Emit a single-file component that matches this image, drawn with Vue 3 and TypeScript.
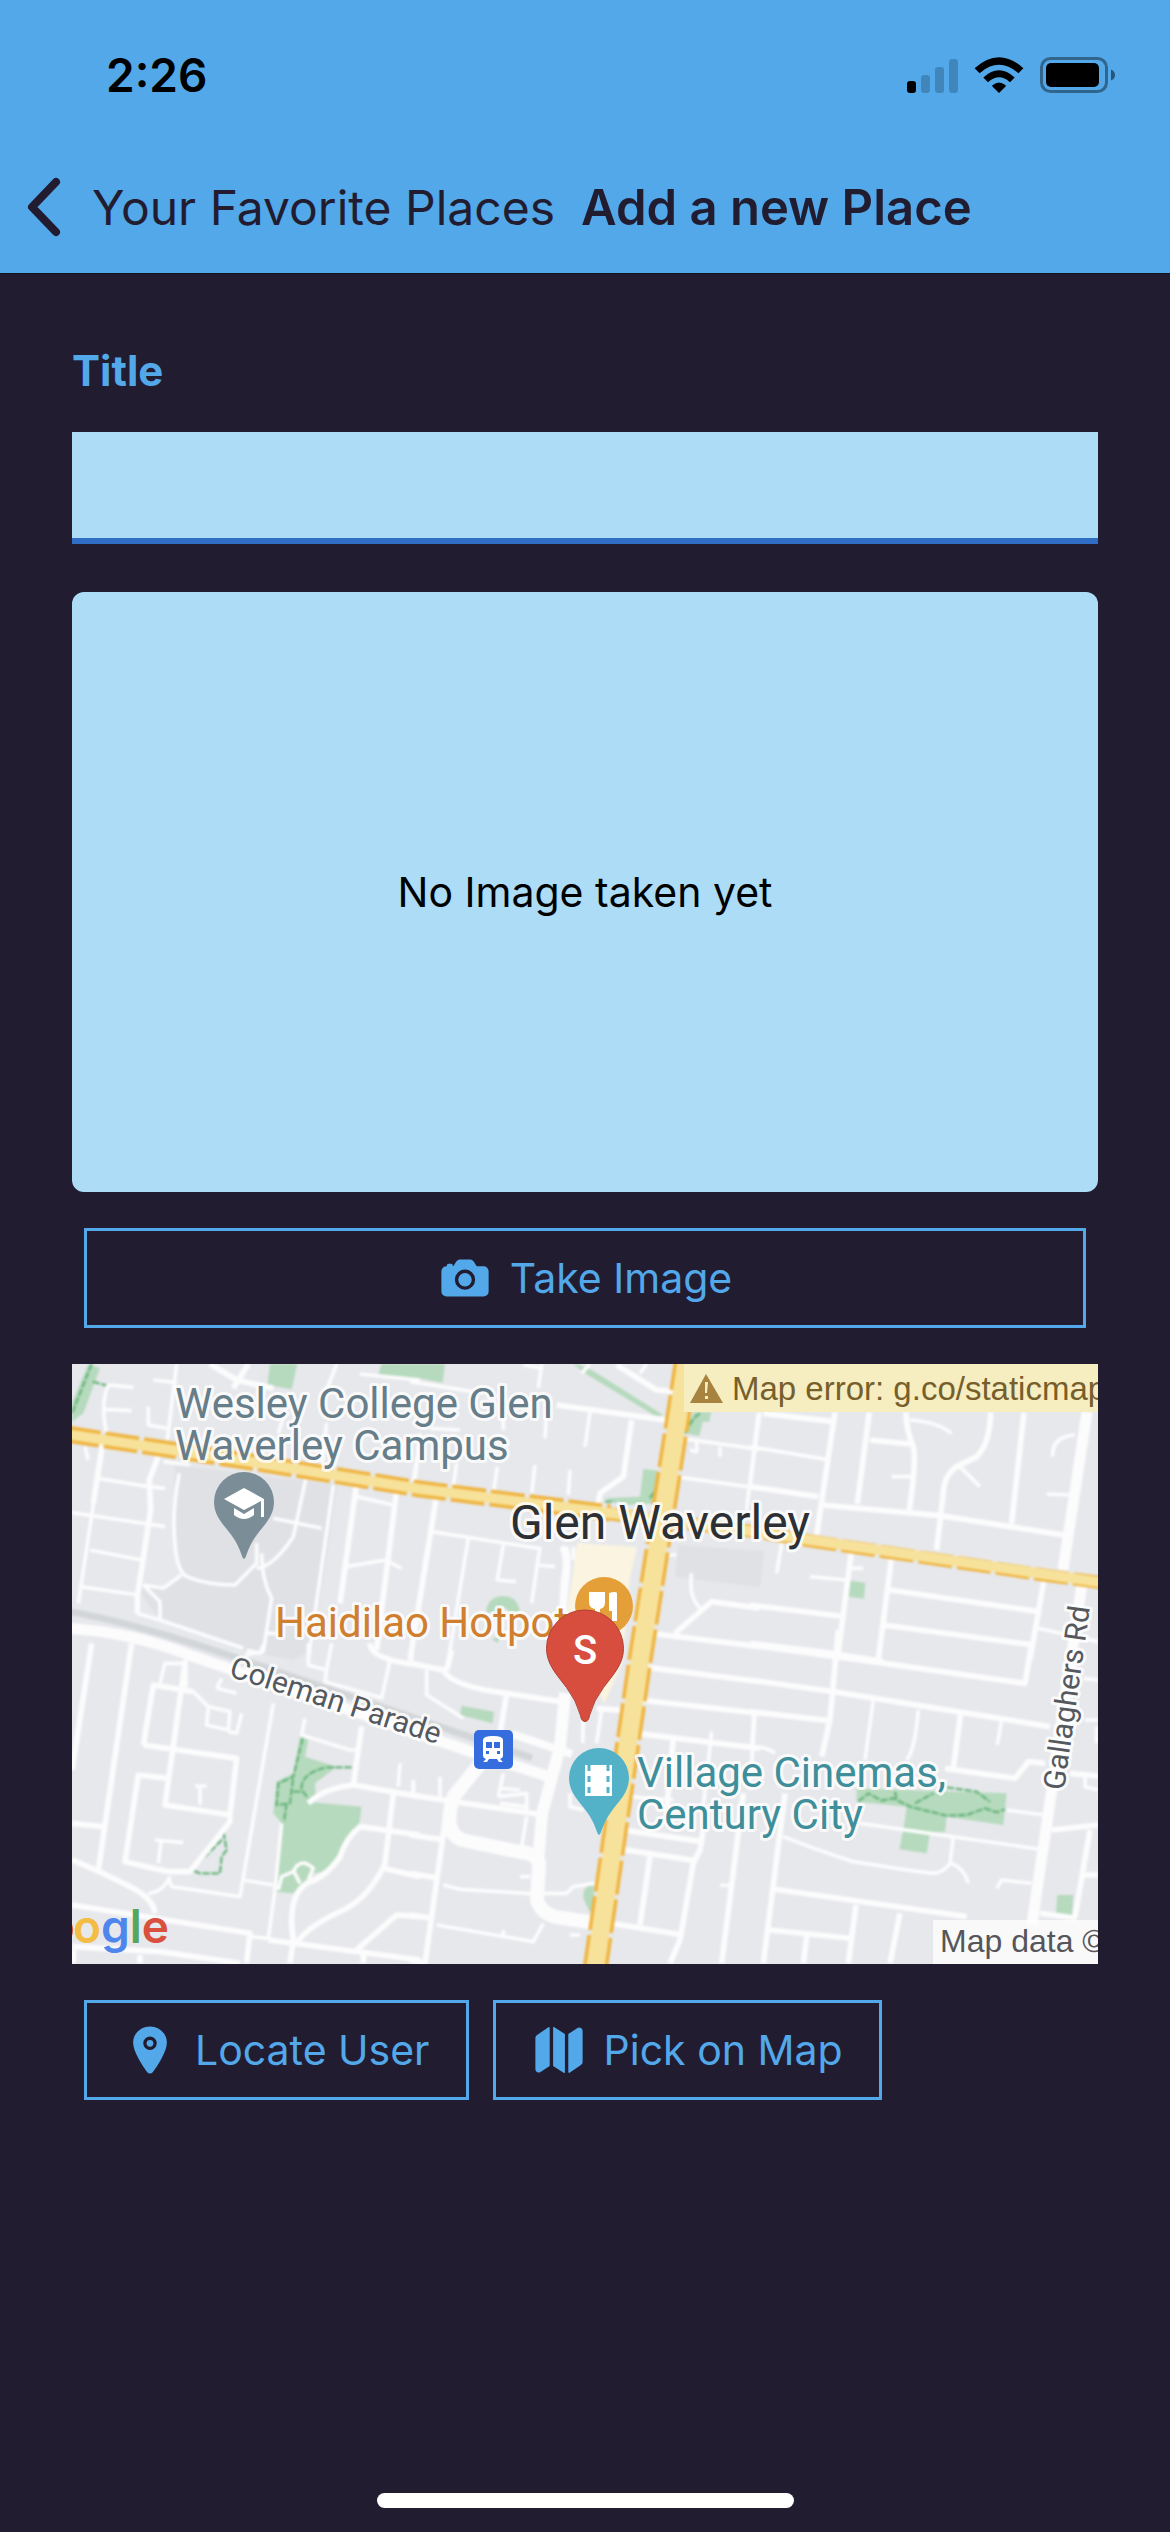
<script setup lang="ts">
import { ref } from 'vue'

interface MapTile {
  x: number
  y: number
  minor: string
  major: string
  parks: string
  trails: string
}

const title = ref('')

// Each tile is drawn in its own grid, three units to one map pixel.
const tiles: MapTile[] = [
  {
    x: -12,
    y: -14,
    minor:
      'M128 280L55 760M115 385L265 410L315 415M36 488L315 530M90 600L245 630M60 710L235 735M350 42L322 270M250 705L310 715L365 675M250 705L300 755V810M358 370Q335 480 345 580Q350 660 380 680Q440 705 525 705L590 640V580M740 375L700 560Q640 650 590 655M640 505L785 535M605 610Q605 690 635 745L610 905L555 915M820 405L745 930M890 440L1000 465M860 650L975 630L1025 655M140 250Q120 160 145 105L220 112M130 178L215 182M265 170V225L320 235M280 90L350 98M830 42L800 120M900 72L1080 90M655 250L670 200M785 350L800 220M1065 390L1080 250M230 790L300 810L550 895M620 850H650M75 290L85 330M310 335L390 345',
    major: 'M298 310L268 390L272 480L232 740V790M450 42L530 90L640 115M565 42L520 115M890 400L840 760M1010 420L950 900M128 280L100 460',
    parks: 'M85 42L120 55L70 190L36 215V160ZM630 42H712L695 118L622 105ZM965 42H1080V92L955 72Z',
    trails: 'M95 42L36 190M98 95L145 108',
  },
  {
    x: 338,
    y: -14,
    minor:
      'M0 95L190 125M395 42L385 115M340 45L400 55M410 180L405 265M540 185L525 290M690 70L710 42M515 70L540 42M10 395L20 330M130 410L140 340M250 430L262 350M375 345L365 430M480 360L475 435M65 545L385 595M175 565L115 930M280 585L262 690L318 695M390 590L365 760M380 645L435 650M815 265L1050 298M1045 190L1010 480M795 380L1050 415M840 300L860 305V275M930 290V320M770 615H800M845 670Q835 740 870 775M280 240V200M60 235L150 240M490 590V630',
    major: 'M440 165L780 212M665 210L640 380L570 430L565 460M620 45L740 120L795 125M80 435L0 930M455 590Q475 620 460 700L455 800M465 590Q480 620 468 700L460 800M795 850L905 755L1050 775M720 850L1050 890',
    parks: 'M0 42H105L98 98L0 80ZM500 42L545 60L760 195L740 200L525 70L490 42ZM850 187H903L898 215H878L868 258L825 250ZM700 357L745 362L738 460L655 465L580 445L690 440ZM228 785Q235 738 280 738Q322 740 330 785L300 790Q280 755 255 790ZM245 865L270 862L262 880Z',
    trails: 'M870 190Q850 200 825 250M745 405L720 445M585 455H615',
  },
  {
    x: 678,
    y: -14,
    minor:
      'M30 187L0 410M0 290L230 328M480 210Q560 215 605 250M425 380H485M630 350L690 410M975 255Q905 260 908 320M890 432L960 435M305 655H340M180 680L290 690M95 580L80 670M865 835L1044 875',
    major:
      'M40 190L250 215M255 187L200 555M0 410L205 440M358 187L322 462M360 270L480 282M468 187Q468 240 490 290Q500 330 478 480M722 187Q720 280 680 320L620 350Q590 370 582 410L560 600M822 187L785 520M215 465L570 497L940 555M305 600L262 930M425 620L385 930M420 720L865 785M882 690L840 930M400 825L850 885M0 765L270 798M0 880L230 908L400 935',
    parks: 'M300 692L346 698L342 746L296 740Z',
    trails: '',
  },
  {
    x: -12,
    y: 286,
    minor:
      'M300 100L315 40H370M400 125L445 170L510 185L505 240L440 225L445 170M640 160L540 740L335 710L325 680M405 408H440M420 408V465M285 570L370 578M303 575L295 640M330 680Q310 725 265 730M470 115L530 130M545 190L530 250L505 245M485 85L470 115M735 205L725 255L870 300H890M550 690L640 705M665 520L645 720L625 865M1020 340L1015 410M1060 390V430M990 30L965 145M745 -20V45L800 60L795 95L970 145M815 -20L800 60M560 0L600 10L610 -15M1055 0V40M655 720L665 680L700 665Q720 620 760 655L745 690M700 660L720 700M625 865L570 860',
    major:
      'M95 -20L36 360M215 -20L115 660M250 285L280 105L400 125M375 40L355 180L315 465L510 495L530 325L250 285M325 665L195 635L235 375L325 385M325 665L390 665L510 515V495M36 520L130 530M36 630Q110 660 210 710Q280 745 285 790M36 765L570 850L560 940M240 940V915M36 890L300 905L540 940M905 230L880 405M745 460Q790 415 880 405L1080 440M1000 430L975 640Q930 740 850 780Q740 830 710 880M1080 555L900 530Q860 560 840 620Q800 680 740 700Q680 740 700 870L690 940M970 655L1080 680M625 870L700 880L1080 930M910 940V910M890 900L1010 795L1080 800M930 -20Q930 30 1080 45M375 30V110M40 900V940',
    parks:
      'M720 260L745 270L735 320L830 350L765 400L768 440L740 455L905 470L898 520Q870 550 840 620Q800 670 765 668L700 730L648 725L665 520L640 490L650 395L700 370Z',
    trails:
      'M728 265L700 380L655 400L650 465L690 460L700 380M680 460L672 515M875 352H800Q720 370 725 420L745 445M700 425H725M490 545L500 600L485 620L480 670H420L395 660L490 565',
  },
  {
    x: 338,
    y: 286,
    minor:
      'M50 60V135L160 205M520 210L518 280M575 175L560 280M280 370L265 440M350 500L335 590M100 705L150 718L350 730H470L490 710L555 700M80 825L370 875L400 820M10 435V390M90 440V380M265 440L350 430V480M270 460L350 470M275 415L330 420M905 245L880 470M1035 190L1020 420M930 705L970 708M655 440L790 450M280 840V860M330 680H360M480 430V470L520 480M480 855H510',
    major:
      'M0 40L100 60Q125 110 290 130L450 155M125 0L110 60M290 130L270 250M560 175L650 182M0 435L400 495M0 555L105 570M110 480L45 940M0 670L85 685M0 795L65 805M710 52L1050 95M690 150L1050 190M680 250L1050 295M790 265L770 480M640 540L875 575M630 597L855 632M880 540L870 600L850 640L810 870L780 940M720 620L690 825M600 820L820 855M1000 430L935 940M0 930L50 940',
    parks: 'M155 167L252 185L248 220L150 195ZM550 705Q520 705 520 740Q525 760 540 785L555 780Z',
    trails: '',
  },
  {
    x: 678,
    y: 286,
    minor:
      'M385 0V30M12 190L5 290Q50 290 75 310M370 150L345 330M505 180Q495 300 470 330M755 210L742 285M770 480L885 495M330 520L865 597M610 560L600 640Q580 670 550 670L470 660L310 635Q200 600 100 560M600 640Q640 650 655 700M740 715L755 690L845 700M1000 85L1044 90M1005 210H1044M1005 380V410L1044 420M1040 230V280',
    major:
      'M0 -15L260 20L825 100L845 -20M265 -60L240 210L215 320M0 90L250 125L900 230M0 185L235 212M632 190L610 355M585 355L795 385L835 335L885 340M105 430L40 940M75 718L370 760L650 800M60 840L300 865M318 765L295 940M170 860L160 940M450 790L420 940M905 540L1044 525M1020 540L975 800M990 675H1044M870 790L980 805M960 370L1044 378',
    parks: 'M320 415L770 430L760 525L590 500L585 547L540 545L530 610L448 598L460 540L470 470L320 455ZM922 735H970L966 797L918 790Z',
    trails:
      'M325 455L355 430L395 452L430 445L480 470L590 497L650 495L705 475L740 487L765 478M590 412L680 425L720 455M435 425L440 450M495 460L550 430',
  },
]

const bars = [12, 18, 26, 34]
</script>

<template>
  <div class="screen">
    <header class="top">
      <div class="status">
        <span class="time">2:26</span>
        <div class="status-icons">
          <svg width="51" height="36" viewBox="0 0 51 36" aria-label="Signal">
            <rect
              v-for="(h, i) in bars"
              :key="h"
              :x="i * 14"
              :y="36 - h"
              width="9"
              :height="h"
              rx="3"
              :fill-opacity="i === 0 ? 1 : 0.2"
            />
          </svg>
          <svg width="50" height="36" viewBox="0 0 50 36" aria-label="Wi-Fi">
            <path d="M25 36L18.200 29.300Q18 28.500 18.800 28Q25 23 31.200 28Q32 28.500 31.800 29.300Z" />
            <path d="M9.300 20.600Q25 6 40.700 20.600L36 25.200Q25 15.500 14 25.200Z" />
            <path d="M.6 11.200Q25-10.800 49.400 11.200L44.400 16.200Q25-.5 5.600 16.200Z" />
          </svg>
          <svg width="76" height="36" viewBox="0 0 76 36" aria-label="Battery">
            <rect x="1.500" y="1.500" width="65" height="33" rx="9" fill="none" stroke="#000" stroke-width="3" opacity=".4" />
            <rect x="6" y="6" width="53" height="24" rx="5" />
            <path d="M71 12.500Q75 14 75 18T71 23.500Z" opacity=".5" />
          </svg>
        </div>
      </div>
      <nav class="nav">
        <a class="back" href="#">
          <svg width="36" height="60" viewBox="0 0 36 60" aria-hidden="true">
            <path d="M30 5L6 30L30 55" />
          </svg>
          <span>Your Favorite Places</span>
        </a>
        <h1>Add a new Place</h1>
      </nav>
    </header>

    <main class="form">
      <label for="place-title">Title</label>
      <input id="place-title" v-model="title" type="text" />

      <div class="preview">No Image taken yet</div>
      <div class="actions">
        <button type="button" class="wide">
          <svg viewBox="0 0 512 512" aria-hidden="true">
            <path
              fill-rule="evenodd"
              d="M432 144h-59c-3 0-6.720-1.940-9.620-5l-25.940-40.940a15.520 15.520 0 00-1.370-1.850C327.110 85.760 315 80 302 80h-92c-13 0-25.110 5.760-34.070 16.210a15.520 15.520 0 00-1.370 1.850l-25.940 41c-2.220 2.420-5.340 5-8.620 5v-8a16 16 0 00-16-16h-24a16 16 0 00-16 16v8h-4a48 48 0 00-48 48V384a48 48 0 0048 48h352a48 48 0 0048-48V192a48 48 0 00-48-48zM256 368a96 96 0 1196-96a96 96 0 01-96 96z"
            />
            <circle cx="256" cy="272" r="64" />
          </svg>
          <span>Take Image</span>
        </button>
      </div>

      <svg class="map" viewBox="0 0 1026 600" preserveAspectRatio="xMidYMid slice" role="img" aria-label="Map of Glen Waverley">
        <g class="soft">
          <rect x="-6" y="-6" width="1038" height="612" fill="#e7e8ec" />
          <path fill="#dfe1e5" d="M103 101L265 121L241 286L221 296L168 286L88 256L66 226L71 221L91 224L110 211Q98 173 103 101Z" />
          <path fill="#dfe1e5" d="M606 181L692 187L688 223L603 213Z" />
          <path fill="#faf4e0" d="M505 179L565 183L558 213L550 300L532 340L495 250Z" />
          <path class="rail" d="M-6 247Q60 258 165 294L460 394" />
          <g v-for="t in tiles" :key="`p${t.x}-${t.y}`" :transform="`translate(${t.x} ${t.y}) scale(.3333)`">
            <path class="park" :d="t.parks" />
            <path class="trail" :d="t.trails" />
          </g>
          <g v-for="t in tiles" :key="`r${t.x}-${t.y}`" :transform="`translate(${t.x} ${t.y}) scale(.3333)`">
            <path class="road" :d="t.minor" />
            <path class="road major" :d="t.major" />
          </g>
          <path class="avenue" stroke-width="11" d="M-6 264Q60 268 120 292L400 388L478 413M1015 48L991 206M1010 220L960 560" />
          <path class="avenue" stroke-width="12" d="M493 329L488 383L470 450L466 500" />
          <path class="avenue" stroke-width="14" d="M408 400L382 432Q370 468 390 476L448 488Q468 490 467 502L465 536Q470 552 490 554L524 559" />
          <path class="avenue" stroke-width="8" d="M440 370L500 390" />
          <path class="highway-edge" stroke-width="17" d="M-6 70L180 98L348 125L538 149" />
          <path class="highway-edge" stroke-width="13" d="M538 150L678 167L745 178L971 211L1032 219" />
          <path class="highway-edge" stroke-width="25" d="M615 -6L604 66L568 296L523 606" />
          <path class="highway" stroke-width="10" d="M-6 70L180 98L348 125L538 149L678 167L745 177L971 210L1032 219" />
          <path class="highway" stroke-width="18" d="M615 -6L604 66L568 296L523 606" />
        </g>

        <g class="label school">
          <text x="103" y="54">Wesley College Glen</text>
          <text x="103" y="96">Waverley Campus</text>
        </g>
        <text class="label town" x="438" y="175">Glen Waverley</text>
        <text class="label food" x="203" y="273">Haidilao Hotpot</text>
        <text class="label street" transform="translate(156 312) rotate(18)">Coleman Parade</text>
        <text class="label street" transform="translate(992 427) rotate(-82)">Gallaghers Rd</text>
        <g class="label cinema">
          <text x="565" y="423">Village Cinemas,</text>
          <text x="565" y="465">Century City</text>
        </g>

        <g>
          <path fill="#7b8e98" d="M172 108a30 30 0 0130 30c0 15-11 24-18 34q-6 8-10 20q-2 6-4 0q-4-12-10-20c-7-10-18-19-18-34a30 30 0 0130-30z" />
          <path fill="#fff" d="M152 135l20-11l20 11v18h-3v-16l-17 9zM162 144l10 6l10-6v7q-10 8-20 0z" />
        </g>
        <circle cx="532" cy="242" r="29" fill="#e59f38" />
        <path fill="#fff" d="M517 228h16v10q0 6-5 7v12h-5v-12q-6-1-6-7zM537 229q7-2 8 0v28h-5v-10h-3z" />
        <g>
          <path fill="#d74e3f" stroke="#b23f34" d="M513 246a38.500 38.500 0 0138.500 38.500c0 16-11 27-20 39q-10 13-14 28q-1 6-4.500 6t-4.500-6q-4-15-14-28c-9-12-20-23-20-39a38.500 38.500 0 0138.500-38.500z" />
          <text class="pin-letter" x="513" y="300">S</text>
        </g>
        <rect x="402" y="366" width="39" height="39" rx="5" fill="#356ddf" />
        <path fill="#fff" d="M411 376q0-4 10-4t10 4v16q0 2-3 3l3 3h-4l-2-3h-8l-2 3h-4l3-3q-3-1-3-3z" />
        <path fill="#356ddf" d="M414 378h6v6h-6zM422 378h6v6h-6zM414 387h3v3h-3zM425 387h3v3h-3z" />
        <g>
          <path fill="#53b1c8" d="M527 384a30 30 0 0130 30c0 15-11 24-18 34q-6 8-10 20q-2 6-4 0q-4-12-10-20c-7-10-18-19-18-34a30 30 0 0130-30z" />
          <path fill="#fff" d="M513 401h27v31h-27z" />
          <path fill="none" stroke="#53b1c8" stroke-width="3" stroke-dasharray="6 5" d="M517 401v31M536 401v31" />
        </g>

        <path fill="#f6edc1" d="M612 0H1026V48H612Z" />
        <path fill="#a8823f" d="M634 10L651 39H618Z" />
        <path fill="#f6edc1" d="M633 18h3l-1 11h-2zM633 32h3v3h-3z" />
        <text class="notice" x="660" y="36">Map error: g.co/staticmap</text>

        <path fill="#fff" fill-opacity=".75" d="M861 556H1026V600H861Z" />
        <text class="credit" x="868" y="588">Map data ©</text>
        <path fill="#d9503f" d="M0 560q2 6 0 12z" />
        <text class="brand" x="1" y="579">
          <tspan fill="#f2bd42">o</tspan><tspan fill="#4f86ec">g</tspan><tspan fill="#58a55c">l</tspan><tspan fill="#d9503f">e</tspan>
        </text>
      </svg>

      <div class="actions">
        <button type="button">
          <svg viewBox="0 0 512 512" aria-hidden="true">
            <path
              d="M256 32C167.780 32 96 100.650 96 185c0 40.170 18.310 93.590 54.420 158.780 29 52.340 62.550 99.670 80 123.220a31.750 31.750 0 0051.220 0c17.420-23.550 51-70.880 80-123.220C397.690 278.610 416 225.190 416 185c0-84.350-71.780-153-160-153zm0 224a64 64 0 1164-64 64.070 64.070 0 01-64 64z"
            />
            <circle cx="256" cy="192" r="32" />
          </svg>
          <span>Locate User</span>
        </button>
        <button type="button">
          <svg viewBox="0 0 512 512" aria-hidden="true">
            <path
              d="M48.170 113.340A32 32 0 0032 141.240V438a32 32 0 0047 28.370c.43-.23.85-.47 1.260-.74l84.140-55.050a8 8 0 003.630-6.720V46.450a8 8 0 00-12.510-6.630zM212.360 39.310A8 8 0 00200 46v357.560a8 8 0 003.630 6.720l96 62.420A8 8 0 00312 466V108.670a8 8 0 00-3.640-6.730zM464.530 46.470a31.640 31.640 0 00-31.500-.88 12.070 12.070 0 00-1.250.74l-84.150 55a8 8 0 00-3.630 6.720v357.460a8 8 0 0012.520 6.630l107.070-73.460a32 32 0 0016.410-28v-296a32.760 32.760 0 00-15.470-28.210z"
            />
          </svg>
          <span>Pick on Map</span>
        </button>
      </div>
    </main>

    <div class="home-indicator"></div>
  </div>
</template>

<style>
body {
  margin: 0;
  background: #221c30;
}
</style>

<style scoped>
.screen {
  display: flex;
  flex-direction: column;
  min-height: 100vh;
  background: #221c30;
  font-family: Inter, "Liberation Sans", sans-serif;
}

.top {
  background: #52a8e9;
  color: #221c30;
  box-shadow: 0 1px 0 #15101f;
}

.status {
  display: flex;
  align-items: center;
  justify-content: space-between;
  box-sizing: border-box;
  height: 141px;
  padding: 8px 54px 0 106px;
  color: #000;
}

.time {
  font-size: 46px;
  font-weight: 600;
}

.status-icons {
  display: flex;
  align-items: center;
  gap: 16px;
}

.nav {
  display: flex;
  align-items: center;
  gap: 26px;
  height: 132px;
  padding: 0 26px;
  white-space: nowrap;
}

.back {
  display: flex;
  align-items: center;
  gap: 30px;
  color: inherit;
  font-size: 48px;
  text-decoration: none;
}

.back path {
  fill: none;
  stroke: #221c30;
  stroke-width: 8;
  stroke-linecap: round;
  stroke-linejoin: round;
}

h1 {
  margin: 0;
  font-size: 49px;
  font-weight: 600;
}

.form {
  display: flex;
  flex: 1;
  flex-direction: column;
  padding: 72px;
}

label {
  margin-bottom: 36px;
  color: #52a8e9;
  font-size: 42px;
  font-weight: 700;
  line-height: 51px;
}

input {
  box-sizing: border-box;
  width: 100%;
  height: 112px;
  padding: 24px 12px;
  border: 0;
  border-bottom: 6px solid #2f6ec4;
  border-radius: 0;
  outline: 0;
  background: #addcf6;
  color: #221c30;
  font: inherit;
  font-size: 48px;
}

.preview {
  display: flex;
  align-items: center;
  justify-content: center;
  height: 600px;
  margin-top: 48px;
  border-radius: 12px;
  background: #addcf6;
  color: #000;
  font-size: 41px;
}

.actions {
  display: flex;
  gap: 24px;
  padding: 36px 12px;
}

button {
  display: flex;
  align-items: center;
  justify-content: center;
  gap: 18px;
  height: 100px;
  padding: 0 36px;
  border: 3px solid #52a8e9;
  background: none;
  color: #52a8e9;
  font: inherit;
  font-size: 41px;
  white-space: nowrap;
}

button svg {
  width: 54px;
  height: 54px;
  fill: currentColor;
}

.wide {
  flex: 1;
}

.map {
  display: block;
  width: 100%;
  height: 600px;
  font-family: Roboto, "Liberation Sans", sans-serif;
}

.soft {
  filter: blur(1px);
}

.park {
  fill: #b6dabd;
}

.trail {
  fill: none;
  stroke: #68b57c;
  stroke-width: 7;
  stroke-dasharray: 22 5;
}

.rail {
  fill: none;
  stroke: #d3d6d9;
  stroke-width: 7;
}

.road {
  fill: none;
  stroke: #fcfcfd;
  stroke-width: 11;
  stroke-linejoin: round;
}

.major {
  stroke-width: 17;
}

.avenue,
.highway,
.highway-edge {
  fill: none;
  stroke: #fcfcfd;
  stroke-linejoin: round;
}

.highway-edge {
  stroke: #efb440;
  stroke-dasharray: 34 5;
}

.highway {
  stroke: #f7e29b;
}

.label {
  font-size: 42px;
  font-weight: 400;
  paint-order: stroke;
  stroke: #fff;
  stroke-opacity: 0.8;
  stroke-width: 6px;
  stroke-linejoin: round;
}

.school {
  fill: #667d8a;
}

.town {
  fill: #2c3034;
  font-size: 48px;
}

.food {
  fill: #cf7f2e;
}

.cinema {
  fill: #3f8f9b;
}

.street {
  fill: #55595d;
  font-size: 30px;
}

.pin-letter {
  fill: #fff;
  font-size: 40px;
  font-weight: 500;
  text-anchor: middle;
}

.notice,
.credit {
  fill: #775f2c;
  font-family: "Liberation Sans", Arial, sans-serif;
  font-size: 32px;
}

.notice {
  font-size: 33px;
}

.credit {
  fill: #55565a;
}

.brand {
  font-family: Inter, sans-serif;
  font-size: 46px;
  font-weight: 600;
}

.home-indicator {
  align-self: center;
  width: 417px;
  height: 15px;
  margin-bottom: 24px;
  border-radius: 8px;
  background: #fff;
}
</style>
